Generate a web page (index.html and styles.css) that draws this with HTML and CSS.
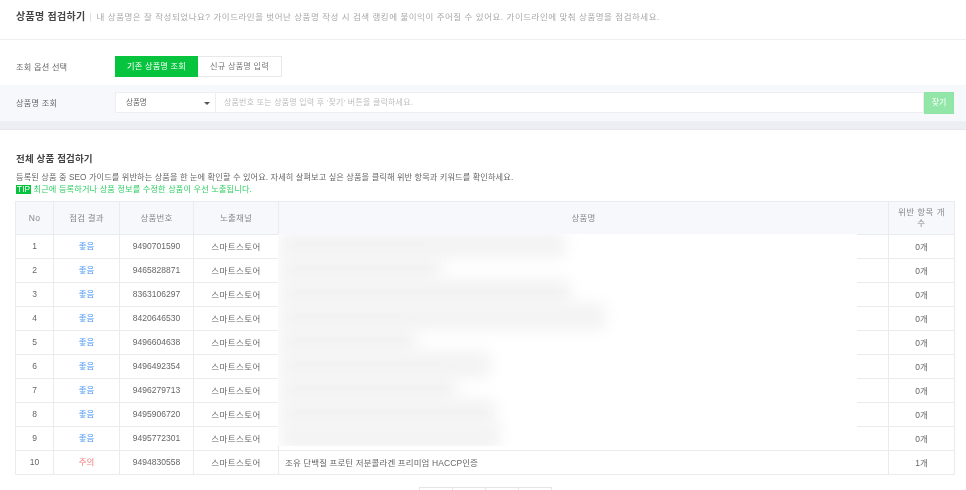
FILE: index.html
```html
<!DOCTYPE html>
<html lang="ko">
<head>
<meta charset="utf-8">
<title>상품명 점검하기</title>
<link rel="stylesheet" href="styles.css">
</head>
<body>
<header class="page-head">
  <h1 class="page-title">상품명 점검하기</h1>
  <span class="sep"></span>
  <p class="page-desc">내 상품명은 잘 작성되었나요? 가이드라인을 벗어난 상품명 작성 시 검색 랭킹에 불이익이 주어질 수 있어요. 가이드라인에 맞춰 상품명을 점검하세요.</p>
</header>
<section class="options">
  <span class="label">조회 옵션 선택</span>
  <div class="toggle">
    <button class="tab tab-on">기존 상품명 조회</button>
    <button class="tab">신규 상품명 입력</button>
  </div>
</section>
<section class="search">
  <span class="label">상품명 조회</span>
  <div class="search-box">
    <div class="select">상품명<i class="caret"></i></div>
    <div class="input">상품번호 또는 상품명 입력 후 '찾기' 버튼을 클릭하세요.</div>
    <button class="find">찾기</button>
  </div>
</section>
<div class="band"></div>
<main class="all">
  <h2 class="all-title">전체 상품 점검하기</h2>
  <p class="all-desc">등록된 상품 중 SEO 가이드를 위반하는 상품을 한 눈에 확인할 수 있어요. 자세히 살펴보고 싶은 상품을 클릭해 위반 항목과 키워드를 확인하세요.</p>
  <p class="tip"><b class="tip-tag">TIP</b> 최근에 등록하거나 상품 정보를 수정한 상품이 우선 노출됩니다.</p>
  <div class="table-wrap">
    <table>
      <colgroup><col class="c1"><col class="c2"><col class="c3"><col class="c4"><col><col class="c6"></colgroup>
      <thead><tr><th>No</th><th>점검 결과</th><th>상품번호</th><th>노출채널</th><th>상품명</th><th class="wrap">위반 항목 개수</th></tr></thead>
      <tbody>
        <tr><td>1</td><td class="good">좋음</td><td>9490701590</td><td class="ch">스마트스토어</td><td></td><td>0개</td></tr>
        <tr><td>2</td><td class="good">좋음</td><td>9465828871</td><td class="ch">스마트스토어</td><td></td><td>0개</td></tr>
        <tr><td>3</td><td class="good">좋음</td><td>8363106297</td><td class="ch">스마트스토어</td><td></td><td>0개</td></tr>
        <tr><td>4</td><td class="good">좋음</td><td>8420646530</td><td class="ch">스마트스토어</td><td></td><td>0개</td></tr>
        <tr><td>5</td><td class="good">좋음</td><td>9496604638</td><td class="ch">스마트스토어</td><td></td><td>0개</td></tr>
        <tr><td>6</td><td class="good">좋음</td><td>9496492354</td><td class="ch">스마트스토어</td><td></td><td>0개</td></tr>
        <tr><td>7</td><td class="good">좋음</td><td>9496279713</td><td class="ch">스마트스토어</td><td></td><td>0개</td></tr>
        <tr><td>8</td><td class="good">좋음</td><td>9495906720</td><td class="ch">스마트스토어</td><td></td><td>0개</td></tr>
        <tr><td>9</td><td class="good">좋음</td><td>9495772301</td><td class="ch">스마트스토어</td><td></td><td>0개</td></tr>
        <tr><td>10</td><td class="warn">주의</td><td>9494830558</td><td class="ch">스마트스토어</td><td class="name">조유 단백질 프로틴 저분콜라겐 프리미엄 HACCP인증</td><td>1개</td></tr>
      </tbody>
    </table>
    <div class="mask">
      <i class="blob b1"></i><i class="blob b2"></i><i class="blob b3"></i><i class="blob b4"></i><i class="blob b5"></i><i class="blob b6"></i><i class="blob b7"></i><i class="blob b8"></i><i class="blob b9"></i>
    </div>
  </div>
  <nav class="pager"><span></span><span></span><span></span><span></span></nav>
</main>
</body>
</html>
```

FILE: styles.css
```css
* { box-sizing: border-box; }
html, body { margin: 0; padding: 0; overflow: hidden; height: 490px; background: #fff; }
body { font-family: "Liberation Sans", "Noto Sans CJK KR", sans-serif; font-size: 8.5px; color: #666; filter: blur(.2px); }
h1, h2, p { margin: 0; }
button { font: inherit; margin: 0; cursor: pointer; }

.page-head { height: 40px; border-bottom: 1px solid #eeeff2; padding: 11px 16px 0; display: flex; align-items: flex-start; }
.page-title { font-size: 10px; line-height: 12px; font-weight: 700; color: #444; letter-spacing: .3px; }
.sep { width: 1px; height: 9px; background: #e2e2e2; margin: 2px 6px 0 4px; }
.page-desc { font-size: 8.5px; line-height: 12px; color: #a8a8a8; letter-spacing: .52px; white-space: nowrap; }

.options { height: 45px; padding: 16px 0 0 16px; display: flex; }
.label { width: 99px; line-height: 21px; color: #666; font-size: 8.2px; letter-spacing: .2px; padding-top: 1px; }
.toggle { display: flex; height: 21px; }
.tab { display: flex; align-items: center; justify-content: center; width: 84px; height: 21px; border: 1px solid #e6e8ec; border-left: 0; background: #fff; color: #777; font-size: 8.2px; line-height: 17px; padding: 0 0 1px; letter-spacing: .2px; }
.tab-on { width: 83px; background: #07c43f; border: 1px solid #07c43f; color: #fff; }

.search { height: 37px; background: #f7f8fb; padding: 7px 12px 0 16px; display: flex; border-bottom: 1px solid #eff0f3; }
.search-box { flex: 1; display: flex; height: 22px; }
.select { width: 101px; height: 21px; background: #fff; border: 1px solid #eceef1; padding-left: 10px; line-height: 20px; font-size: 7.5px; color: #666; position: relative; }
.caret { position: absolute; right: 5px; top: 9px; border: 3.5px solid transparent; border-top: 3.5px solid #555; border-bottom: 0; }
.input { flex: 1; height: 21px; background: #fff; border: 1px solid #eceef1; border-left: 0; padding-left: 8px; line-height: 20px; font-size: 8px; color: #bdbdbd; letter-spacing: .2px; }
.find { display: flex; align-items: center; justify-content: center; width: 30px; height: 22px; background: #92e6a8; border: 1px solid #8fe3a5; color: #fff; font-size: 8px; line-height: 17px; padding: 0 0 2px; }

.band { height: 8px; background: #eceef3; border-bottom: 1px solid #e6e7ee; }

.all { padding: 22px 11px 0 15px; }
.all-title { font-size: 9.5px; line-height: 13px; font-weight: 700; color: #444; letter-spacing: .15px; padding-left: 1px; }
.all-desc { font-size: 8.2px; line-height: 12px; margin-top: 7px; color: #666; letter-spacing: .1px; padding-left: 1px; white-space: nowrap; }
.tip { font-size: 8.2px; line-height: 12px; color: #2fcf63; letter-spacing: .13px; padding-left: 1px; white-space: nowrap; }
.tip-tag { background: #07c43f; color: #fff; font-weight: 400; padding: 0 1px; }

.table-wrap { position: relative; margin-top: 5px; }
table { width: 100%; border-collapse: collapse; table-layout: fixed; border: 1px solid #eceef2; }
.c1 { width: 38px; } .c2 { width: 66px; } .c3 { width: 74px; } .c4 { width: 85px; } .c6 { width: 66px; }
th, td { border: 1px solid #e9ebef; text-align: center; font-weight: 400; padding: 0 0 2px; font-size: 8.5px; }
th { height: 33px; background: #f7f8fb; color: #888; line-height: 11px; padding: 0 2px; letter-spacing: .2px; }
th.wrap { padding: 0 7px; letter-spacing: .45px; }
td { height: 24px; color: #666; }
td.ch { letter-spacing: .4px; }
td.good { color: #4b98f0; padding-bottom: 3px; }
td.warn { color: #f27a7a; padding-bottom: 3px; }
td.name { text-align: left; padding-left: 6px; letter-spacing: .1px; }

.mask { position: absolute; left: 263px; top: 33px; width: 579px; height: 212px; background: #fff; overflow: hidden; }
.blob { position: absolute; left: 2px; height: 27px; background: #f3f3f3; filter: blur(7px); }
.b1 { top: -3px; width: 285px; }
.b2 { top: 21px; width: 160px; }
.b3 { top: 45px; width: 290px; }
.b4 { top: 69px; width: 325px; }
.b5 { top: 93px; width: 135px; }
.b6 { top: 117px; width: 210px; }
.b7 { top: 141px; width: 175px; }
.b8 { top: 165px; width: 215px; }
.b9 { top: 189px; width: 220px; }

.pager { display: flex; justify-content: center; margin-top: 12px; padding-left: 2px; }
.pager span { width: 34px; height: 30px; border: 1px solid #e4e5e8; margin-left: -1px; }
```
